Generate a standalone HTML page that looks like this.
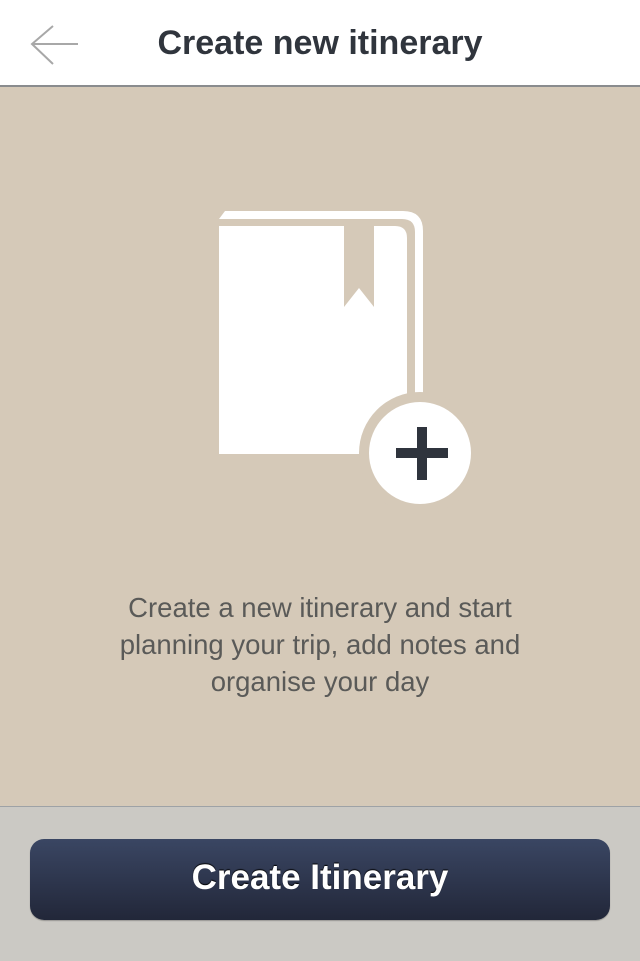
<!DOCTYPE html>
<html><head><meta charset="utf-8"><style>
html,body{margin:0;padding:0;width:640px;height:960px;overflow:hidden;font-family:"Liberation Sans",sans-serif}
.hdr{position:absolute;left:0;top:0;width:640px;height:85px;background:#fff;border-bottom:2px solid #8a8c8e}
.hdr h1{position:absolute;left:0;right:0;top:0;margin:0;text-align:center;line-height:86px;font-size:34px;font-weight:bold;color:#30353d}
.main{position:absolute;left:0;top:87px;width:640px;height:719px;background:#d5c9b8}
.txt{position:absolute;left:0;right:0;top:589px;text-align:center;font-size:27.5px;line-height:37px;color:#5a5a58}
.bar{position:absolute;left:0;top:806px;width:640px;height:154px;background:#cbc9c4;border-top:1px solid #9ea2a6}
.btn{position:absolute;left:30px;top:839px;width:580px;height:81px;border-radius:14px;background:linear-gradient(#3a4663,#222739);box-shadow:0 1px 1px rgba(0,0,0,.25);color:#fff;font-weight:bold;font-size:35px;text-align:center;line-height:78px;text-shadow:0 -1px 1px #000}
</style></head><body>
<div class="hdr">
<svg style="position:absolute;left:30px;top:24px" width="52" height="44" viewBox="0 0 52 44"><path d="M48 20H3M23 2L2 20L23 40" fill="none" stroke="#a8a8a8" stroke-width="2"/></svg>
<h1>Create new itinerary</h1></div>
<div class="main"></div>
<svg style="position:absolute;left:0;top:0" width="640" height="806">
<path d="M225 211H403Q423 211 423 231V400H415V232Q415 219 402 219H219Z" fill="#fff"/>
<path d="M219 226H344V307L359 288L374 307V226H395Q407 226 407 238V454H219Z" fill="#fff"/>
<circle cx="420" cy="453" r="61" fill="#d5c9b8"/>
<circle cx="420" cy="453" r="51" fill="#fff"/>
<rect x="417" y="427" width="10" height="53" fill="#2f343d"/>
<rect x="396" y="448" width="52" height="10" fill="#2f343d"/>
</svg>
<div class="txt">Create a new itinerary and start<br>planning your trip, add notes and<br>organise your day</div>
<div class="bar"></div>
<div class="btn">Create Itinerary</div>
</body></html>
